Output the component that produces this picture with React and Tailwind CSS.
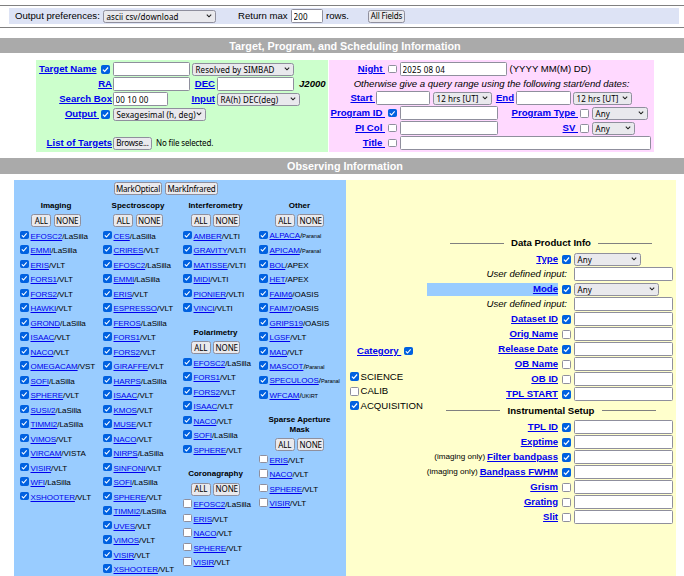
import React from "react";

const UI = "font-['Noto_Sans','Open_Sans',sans-serif] text-[8px] text-black";

function Check({ on = true, size = "size-[9px]", className = "" }) {
  return (
    <span
      className={`inline-block shrink-0 rounded-[1.5px] border ${size} ${on ? "border-[#0061e0] bg-[#0061e0]" : "border-[#8f8f9d] bg-white"} ${className}`}
    >
      {on && (
        <svg viewBox="0 0 7 7" className="block size-full" fill="none" stroke="white" strokeWidth="1.2">
          <path d="M0.9 3.6 L2.7 5.4 L6.1 1.5" />
        </svg>
      )}
    </span>
  );
}

function Field({ value = "", className = "" }) {
  return (
    <input
      type="text"
      defaultValue={value}
      className={`h-[13.5px] shrink-0 rounded-[1.5px] border border-[#8f8f9d] bg-white px-[1.5px] tracking-[0.18px] outline-none ${UI} ${className}`}
    />
  );
}

function Select({ children, className = "" }) {
  return (
    <div
      className={`flex h-[13px] shrink-0 items-center justify-between rounded-[2.5px] border border-[#8f8f9d] bg-[#e9e9ed] pr-[3.5px] pl-[2.5px] tracking-[0.1px] whitespace-nowrap ${UI} ${className}`}
    >
      <span className="leading-[11px]">{children}</span>
      <svg viewBox="0 0 6 4" className="h-[4px] w-[6px] shrink-0" fill="none" stroke="#222" strokeWidth="1.1">
        <path d="M0.8 0.6 L3 2.8 L5.2 0.6" />
      </svg>
    </div>
  );
}

function Button({ children, className = "" }) {
  return (
    <button
      className={`flex h-[13px] shrink-0 items-center justify-center rounded-[2.5px] border border-[#8f8f9d] bg-[#e9e9ed] leading-none tracking-[-0.15px] whitespace-nowrap ${UI} ${className}`}
    >
      {children}
    </button>
  );
}

function Link({ children }) {
  return (
    <a className="font-bold whitespace-pre text-[#0000ee] underline decoration-1 underline-offset-1">{children}</a>
  );
}

/* Right-aligned label cell; the width class sets where the label ends. */
function Label({ children, className = "" }) {
  return <div className={`flex shrink-0 items-center justify-end whitespace-nowrap ${className}`}>{children}</div>;
}

function Band({ children, className = "" }) {
  return (
    <h2 className={`flex items-center justify-center bg-[#aaaaaa] pl-[6px] text-[10.8px] font-bold text-white ${className}`}>
      {children}
    </h2>
  );
}

function Group({ title, items, on = true, className = "", indent, shift = "", tall = false }) {
  return (
    <section className={className}>
      <h3 className={`flex items-center justify-center text-center text-[8px] leading-[10px] font-bold ${shift} ${tall ? "h-6" : "h-3.5"}`}>
        <span className="whitespace-pre-line">{title}</span>
      </h3>
      <div className={`flex h-4 items-center justify-center gap-[2.5px] ${shift}`}>
        <Button className="w-[20px]">ALL</Button>
        <Button className="w-[27px]">NONE</Button>
      </div>
      <ul className={indent}>
        {items.map((item) => {
          const [name, site] = item.split("|");
          const small = site === "Paranal" || site === "UKIRT";
          return (
            <li key={item} className="flex h-[14.5px] items-center whitespace-nowrap">
              <Check on={on} size="size-[8.5px]" className="mr-[2px] mb-[1.5px]" />
              <span className="pt-[0.5px] text-[8px] leading-[13px] tracking-[-0.06px]">
                <a className="text-[#0000ee] underline decoration-1 underline-offset-1">{name}</a>/
                <span className={small ? "text-[5.6px]" : ""}>{site}</span>
              </span>
            </li>
          );
        })}
      </ul>
    </section>
  );
}

const imaging = ["EFOSC2|LaSilla", "EMMI|LaSilla", "ERIS|VLT", "FORS1|VLT", "FORS2|VLT", "HAWKI|VLT", "GROND|LaSilla", "ISAAC|VLT", "NACO|VLT", "OMEGACAM|VST", "SOFI|LaSilla", "SPHERE|VLT", "SUSI/2|LaSilla", "TIMMI2|LaSilla", "VIMOS|VLT", "VIRCAM|VISTA", "VISIR|VLT", "WFI|LaSilla", "XSHOOTER|VLT"];
const spectroscopy = ["CES|LaSilla", "CRIRES|VLT", "EFOSC2|LaSilla", "EMMI|LaSilla", "ERIS|VLT", "ESPRESSO|VLT", "FEROS|LaSilla", "FORS1|VLT", "FORS2|VLT", "GIRAFFE|VLT", "HARPS|LaSilla", "ISAAC|VLT", "KMOS|VLT", "MUSE|VLT", "NACO|VLT", "NIRPS|LaSilla", "SINFONI|VLT", "SOFI|LaSilla", "SPHERE|VLT", "TIMMI2|LaSilla", "UVES|VLT", "VIMOS|VLT", "VISIR|VLT", "XSHOOTER|VLT"];
const interferometry = ["AMBER|VLTI", "GRAVITY|VLTI", "MATISSE|VLTI", "MIDI|VLTI", "PIONIER|VLTI", "VINCI|VLTI"];
const polarimetry = ["EFOSC2|LaSilla", "FORS1|VLT", "FORS2|VLT", "ISAAC|VLT", "NACO|VLT", "SOFI|LaSilla", "SPHERE|VLT"];
const coronagraphy = ["EFOSC2|LaSilla", "ERIS|VLT", "NACO|VLT", "SPHERE|VLT", "VISIR|VLT"];
const other = ["ALPACA|Paranal", "APICAM|Paranal", "BOL|APEX", "HET|APEX", "FAIM6|OASIS", "FAIM7|OASIS", "GRIPS19|OASIS", "LGSF|VLT", "MAD|VLT", "MASCOT|Paranal", "SPECULOOS|Paranal", "WFCAM|UKIRT"];
const aperture = ["ERIS|VLT", "NACO|VLT", "SPHERE|VLT", "VISIR|VLT"];

const product = [
  { label: "Type", on: true, select: "w-[67px]" },
  { hint: "User defined input:" },
  { label: "Mode", on: true, select: "w-[85px]", mark: true },
  { hint: "User defined input:" },
  { label: "Dataset ID", on: true },
  { label: "Orig Name", on: false },
  { label: "Release Date", on: true },
  { label: "OB Name", on: false },
  { label: "OB ID", on: false },
  { label: "TPL START", on: true },
];
const setup = [
  { label: "TPL ID", on: true },
  { label: "Exptime", on: true },
  { label: "Filter bandpass", on: true, note: "(imaging only)" },
  { label: "Bandpass FWHM", on: true, note: "(imaging only)" },
  { label: "Grism", on: false },
  { label: "Grating", on: false },
  { label: "Slit", on: false },
];

function ParamRow({ label, on, hint, note, select, mark }) {
  return (
    <div className="flex h-[15px] items-center">
      {hint ? (
        <Label className="mr-[7px] w-[140px] italic">{hint}</Label>
      ) : (
        <>
          <Label className={`mr-[4px] w-[131px] ${mark ? "h-[13px] bg-[#99ccff]" : ""}`}>
            {note && <span className="mr-[2px] text-[8.1px]">{note}</span>}
            <Link>{label}</Link>
          </Label>
          <Check on={on} className="mr-[3px]" />
        </>
      )}
      {select ? <Select className={select}>Any</Select> : <Field className="w-[99px]" />}
    </div>
  );
}

function RuleHeading({ children, className = "" }) {
  return (
    <div className={`flex items-center justify-center ${className}`}>
      <span className="h-px w-[54px] bg-[#808080]" />
      <h3 className="px-[7.5px] font-bold whitespace-nowrap">{children}</h3>
      <span className="h-px w-[54px] bg-[#808080]" />
    </div>
  );
}

export default function App() {
  return (
    <div className="h-[576px] w-[684px] overflow-hidden bg-white pt-[5px] font-['Liberation_Sans',Arial,sans-serif] text-[9.6px] leading-[12px] text-black">
      <header className="h-[23px] border-y border-[#808080] pt-[2px] pr-[5px] pl-[9px]">
        <div className="flex h-4 items-center bg-[#dde3f5] pl-[6px]">
          <span className="w-[88px] whitespace-nowrap">Output preferences:</span>
          <Select className="w-[113px]">ascii csv/download</Select>
          <span className="ml-[22px] w-[53px] whitespace-nowrap">Return max</span>
          <Field value="200" className="w-[32px]" />
          <span className="ml-[3px] w-[42px]">rows.</span>
          <Button className="w-[37px]">All Fields</Button>
        </div>
      </header>

      <Band className="mt-[10px] h-[15px]">Target, Program, and Scheduling Information</Band>

      <div className="mt-[7px] flex gap-px pl-[36px]">
        <div className="h-[92px] w-[292px] bg-[#ccffcc] pt-[1.5px]">
          <div className="flex h-[15px] items-center">
            <Label className="mr-[4.5px] w-[60.5px] whitespace-pre"><Link>Target Name</Link></Label>
            <Check />
            <Field className="ml-[3px] w-[77px]" />
            <Select className="ml-[2px] w-[102px]">Resolved by SIMBAD</Select>
          </div>
          <div className="flex h-[15px] items-center">
            <Label className="mr-px w-[76px]"><Link>RA</Link></Label>
            <Field className="w-[77px]" />
            <Label className="mr-[2px] w-[25px]"><Link>DEC</Link></Label>
            <Field className="w-[77px]" />
            <span className="ml-[5px] font-bold italic">J2000</span>
          </div>
          <div className="flex h-[15px] items-center">
            <Label className="mr-px w-[76px]"><Link>Search Box</Link></Label>
            <Field value="00 10 00" className="w-[55px]" />
            <Label className="mr-[2px] w-[47px]"><Link>Input</Link></Label>
            <Select className="w-[83px]">RA(h) DEC(deg)</Select>
          </div>
          <div className="flex h-[15px] items-center">
            <Label className="mr-[2px] w-[63px]"><Link>{"Output "}</Link></Label>
            <Check />
            <Select className="ml-[3px] w-[93px]">Sexagesimal (h, deg)</Select>
          </div>
          <div className="mt-[14px] flex h-[15px] items-center">
            <Label className="mr-px w-[76px]"><Link>List of Targets</Link></Label>
            <Button className="w-[39px]">Browse...</Button>
            <span className={`ml-[4px] tracking-[-0.15px] ${UI}`}>No file selected.</span>
          </div>
        </div>

        <div className="h-[92px] w-[325px] bg-[#ffd9ff] pt-[1.5px]">
          <div className="flex h-[15px] items-center">
            <Label className="mr-[3px] w-[56px]"><Link>{"Night "}</Link></Label>
            <Check on={false} size="size-[8.5px]" />
            <Field value="2025 08 04" className="ml-[3.5px] w-[107px]" />
            <span className="ml-[2.5px]">(YYYY MM(M) DD)</span>
          </div>
          <p className="h-[14px] text-center leading-[14px] whitespace-nowrap italic">
            Otherwise give a query range using the following start/end dates:
          </p>
          <div className="flex h-[15px] items-center">
            <Label className="mr-px w-[46px]"><Link>{"Start "}</Link></Label>
            <Field className="w-[54px]" />
            <Select className="ml-[3px] w-[59px]">12 hrs [UT]</Select>
            <Label className="mr-[2px] w-[22px]"><Link>End</Link></Label>
            <Field className="w-[55px]" />
            <Select className="ml-[2px] w-[59px]">12 hrs [UT]</Select>
          </div>
          <div className="flex h-[15px] items-center">
            <Label className="mr-[3px] w-[56px]"><Link>{"Program ID "}</Link></Label>
            <Check size="size-[8.5px]" />
            <Field className="ml-[3.5px] w-[98px]" />
            <Label className="mr-[2px] w-[80px]"><Link>{"Program Type "}</Link></Label>
            <Check on={false} />
            <Select className="ml-[3px] w-[56px]">Any</Select>
          </div>
          <div className="flex h-[15px] items-center">
            <Label className="mr-[3px] w-[56px]"><Link>{"PI Col "}</Link></Label>
            <Check on={false} size="size-[8.5px]" />
            <Field className="ml-[3.5px] w-[98px]" />
            <Label className="mr-[2px] w-[80px]"><Link>{"SV "}</Link></Label>
            <Check on={false} />
            <Select className="ml-[3px] w-[43px]">Any</Select>
          </div>
          <div className="flex h-[15px] items-center">
            <Label className="mr-[3px] w-[56px]"><Link>{"Title "}</Link></Label>
            <Check on={false} size="size-[8.5px]" />
            <Field className="ml-[3.5px] w-[251px]" />
          </div>
        </div>
      </div>

      <Band className="mt-[6px] h-[16px]">Observing Information</Band>

      <main className="mt-[6px] flex h-[396px] pl-[14px]">
        <div className="w-[332px] bg-[#99ccff]">
          <div className="flex h-[18px] gap-[3px] pt-[2px] pl-[100px]">
            <Button className="w-[48px]">MarkOptical</Button>
            <Button className="w-[53px]">MarkInfrared</Button>
          </div>
          <div className="flex pt-[0.5px]">
            <Group title="Imaging" items={imaging} indent="pl-[6px]" shift="pl-px" className="w-[83px]" />
            <Group title="Spectroscopy" items={spectroscopy} indent="pl-[6px]" shift="pl-[2px]" className="w-[80px]" />
            <div className="flex w-[77px] flex-col gap-[10px]">
              <Group title="Interferometry" items={interferometry} indent="pl-[6px]" />
              <Group title="Polarimetry" items={polarimetry} indent="pl-[6px]" />
              <Group title="Coronagraphy" items={coronagraphy} on={false} indent="pl-[6px]" />
            </div>
            <div className="flex w-[90px] flex-col gap-[10px]">
              <Group title="Other" items={other} indent="pl-[5px]" shift="pl-px" />
              <Group title={"Sparse Aperture\nMask"} items={aperture} on={false} indent="pl-[5px]" shift="pl-px" tall />
            </div>
          </div>
        </div>

        <div className="flex w-[330px] bg-[#ffffcc]">
          <div className="w-[81px] pt-[164px] pl-[4px]">
            <div className="mb-[11.5px] flex h-[14px] items-center pl-[7px]">
              <Link>{"Category "}</Link>
              <Check className="ml-[3px]" size="size-[8.5px]" />
            </div>
            {[["SCIENCE", true], ["CALIB", false], ["ACQUISITION", true]].map(([name, on]) => (
              <div key={name} className="flex h-[14.6px] items-center">
                <Check on={on} className="mr-[1.5px]" />
                {name}
              </div>
            ))}
          </div>
          <div className="w-[249px] pt-[55px]">
            <RuleHeading className="h-[16.5px] w-[248px]">Data Product Info</RuleHeading>
            {product.map((row, i) => <ParamRow key={i} {...row} />)}
            <RuleHeading className="h-[18px] w-[248px]">Instrumental Setup</RuleHeading>
            {setup.map((row, i) => <ParamRow key={i} {...row} />)}
          </div>
        </div>
      </main>
    </div>
  );
}
